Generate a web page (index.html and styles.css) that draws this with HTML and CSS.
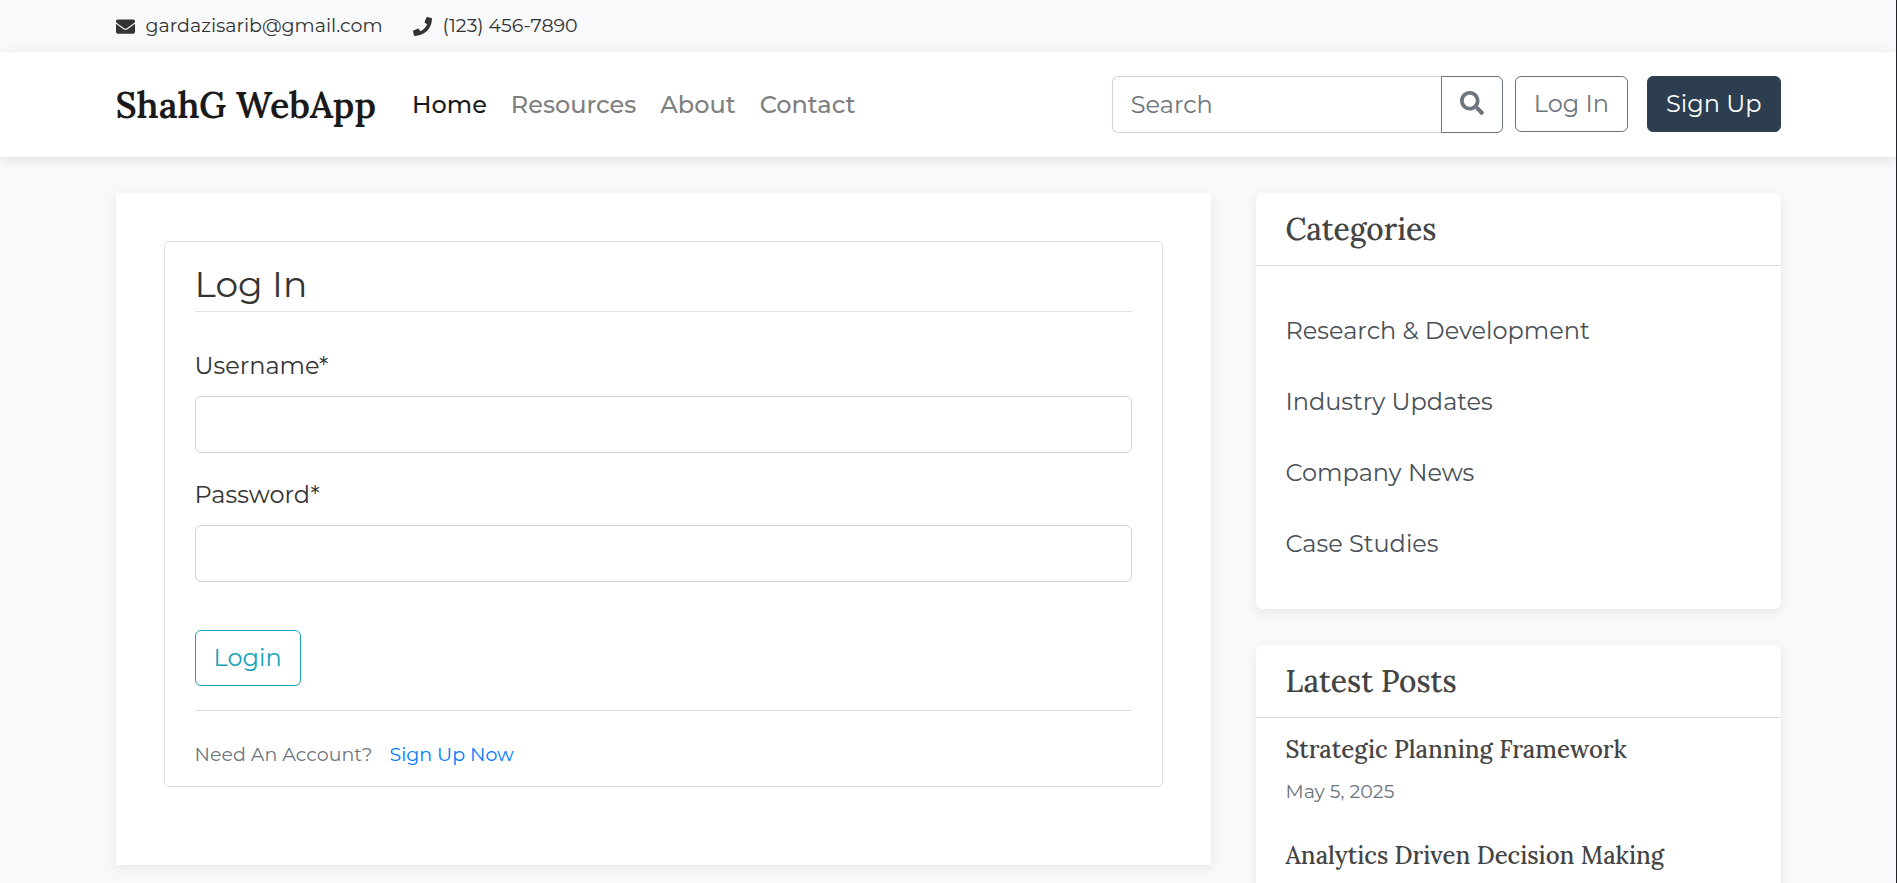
FILE: index.html
```html
<!DOCTYPE html>
<html lang="en">
<head>
<meta charset="utf-8">
<meta name="viewport" content="width=device-width, initial-scale=1">
<title>ShahG WebApp - Log In</title>
<link rel="stylesheet" href="styles.css">
</head>
<body>
<div class="topbar">
  <div class="container topbar-items">
    <a class="contact-link" href="mailto:gardazisarib@gmail.com">
      <svg class="contact-icon" viewBox="0 0 512 512" aria-hidden="true"><path fill="currentColor" d="M502.300 190.800c3.900-3.100 9.700-.2 9.700 4.700V400c0 26.500-21.500 48-48 48H48c-26.500 0-48-21.500-48-48V195.600c0-5 5.700-7.800 9.700-4.700 22.400 17.400 52.100 39.500 154.100 113.600 21.100 15.400 56.700 47.800 92.200 47.600 35.700.3 72-32.800 92.300-47.600 102-74.100 131.600-96.300 154-113.700zM256 320c23.200.4 56.600-29.200 73.400-41.400 132.700-96.300 142.800-104.700 173.400-128.700 5.800-4.500 9.200-11.500 9.200-18.900v-19c0-26.500-21.500-48-48-48H48c-26.500 0-48 21.500-48 48v19c0 7.400 3.400 14.300 9.200 18.900 30.600 23.900 40.700 32.400 173.400 128.700 16.800 12.200 50.200 41.800 73.400 41.400z"/></svg>
      <span>gardazisarib@gmail.com</span>
    </a>
    <a class="contact-link" href="tel:1234567890">
      <svg class="contact-icon" viewBox="0 0 512 512" aria-hidden="true"><path fill="currentColor" d="M493.400 24.600l-104-24c-11.300-2.600-22.900 3.300-27.500 13.900l-48 112c-4.200 9.800-1.400 21.300 6.900 28l60.600 49.600c-36 76.700-98.900 140.500-177.200 177.200l-49.600-60.600c-6.800-8.300-18.200-11.100-28-6.900l-112 48C3.900 366.500-2 378.100.6 389.400l24 104C27.100 504.200 36.700 512 48 512c256.100 0 464-207.500 464-464 0-11.200-7.700-20.900-18.600-23.400z"/></svg>
      <span>(123) 456-7890</span>
    </a>
  </div>
</div>

<header class="header">
  <div class="container header-row">
    <a class="brand" href="#">ShahG WebApp</a>
    <nav class="nav" aria-label="Main">
      <a class="nav-link active" href="#" aria-current="page">Home</a>
      <a class="nav-link" href="#">Resources</a>
      <a class="nav-link" href="#">About</a>
      <a class="nav-link" href="#">Contact</a>
    </nav>
    <form class="search">
      <input class="search-input" type="search" placeholder="Search" aria-label="Search">
      <button class="search-button" type="submit" aria-label="Submit search">
        <svg class="search-icon" viewBox="0 0 512 512" aria-hidden="true"><path fill="currentColor" d="M505 442.700L405.300 343c-4.500-4.500-10.600-7-17-7H372c27.600-35.300 44-79.700 44-128C416 93.100 322.900 0 208 0S0 93.100 0 208s93.100 208 208 208c48.300 0 92.700-16.400 128-44v16.300c0 6.400 2.500 12.500 7 17l99.700 99.700c9.400 9.400 24.600 9.400 33.900 0l28.300-28.300c9.400-9.400 9.400-24.600.1-34zM208 336c-70.700 0-128-57.200-128-128 0-70.700 57.200-128 128-128 70.700 0 128 57.200 128 128 0 70.700-57.200 128-128 128z"/></svg>
      </button>
    </form>
    <div class="actions">
      <a class="button button-outline" href="#">Log In</a>
      <a class="button button-dark" href="#">Sign Up</a>
    </div>
  </div>
</header>

<div class="container layout">
  <main class="panel">
    <section class="login-card">
      <form>
        <h1 class="login-title">Log In</h1>
        <div class="field">
          <label class="field-label" for="username">Username*</label>
          <input class="field-input" id="username" type="text" autocomplete="username" required>
        </div>
        <div class="field">
          <label class="field-label" for="password">Password*</label>
          <input class="field-input" id="password" type="password" autocomplete="current-password" required>
        </div>
        <button class="button button-info" type="submit">Login</button>
      </form>
      <p class="signup-note">Need An Account? <a class="signup-link" href="#">Sign Up Now</a></p>
    </section>
  </main>

  <aside class="sidebar">
    <section class="widget">
      <h2 class="widget-title">Categories</h2>
      <ul class="category-list">
        <li><a class="category-link" href="#">Research &amp; Development</a></li>
        <li><a class="category-link" href="#">Industry Updates</a></li>
        <li><a class="category-link" href="#">Company News</a></li>
        <li><a class="category-link" href="#">Case Studies</a></li>
      </ul>
    </section>
    <section class="widget">
      <h2 class="widget-title">Latest Posts</h2>
      <ul class="post-list">
        <li class="post">
          <a class="post-link" href="#">Strategic Planning Framework</a>
          <time class="post-date" datetime="2025-05-05">May 5, 2025</time>
        </li>
        <li class="post">
          <a class="post-link" href="#">Analytics Driven Decision Making</a>
        </li>
      </ul>
    </section>
  </aside>
</div>
</body>
</html>
```
FILE: styles.css
```css
*,
*::before,
*::after {
  box-sizing: border-box;
}

:root {
  --sans: Montserrat, Inter, sans-serif;
  --serif: Lora, "DejaVu Serif", serif;
}

body {
  margin: 0;
  min-height: 100vh;
  border-right: 1px solid #212529;
  background: #f8f9fb;
  color: #333;
  font: 400 24px/36px var(--sans);
}

a {
  color: inherit;
  text-decoration: none;
}

ul {
  margin: 0;
  padding: 0;
  list-style: none;
}

input,
button {
  font: inherit;
}

.container {
  width: calc(100% - 48px);
  max-width: 1665px;
  margin: 0 auto;
}

/* Contact bar */
.topbar {
  padding: 8px 0;
}

.topbar-items {
  display: flex;
  gap: 30px;
  font-size: 19px;
}

.contact-link {
  display: flex;
  align-items: center;
  gap: 11px;
}

.contact-icon {
  width: 19px;
  height: 19px;
}

/* Header */
.header {
  padding: 24px 0;
  background: #fff;
  box-shadow: 0 3px 12px rgba(0, 0, 0, 0.1);
}

.header-row {
  display: flex;
  align-items: center;
}

.brand {
  margin-right: 36px;
  color: #1a1a1a;
  font: 600 36px/48px var(--serif);
  white-space: nowrap;
}

.nav {
  display: flex;
  gap: 24px;
  margin-right: auto;
  color: #808080;
  font-weight: 500;
}

.nav-link.active {
  color: #1a1a1a;
}

.search {
  display: flex;
  width: 391px;
  margin-right: 12px;
}

.search-input {
  flex: 1;
  min-width: 0;
  height: 57px;
  padding: 0 18px;
  border: 1px solid #ced4da;
  border-right: 0;
  border-radius: 6px 0 0 6px;
  background: #fff;
  appearance: none;
}

.search-input::placeholder {
  color: #6c757d;
  opacity: 1;
}

.search-button {
  display: flex;
  align-items: center;
  justify-content: center;
  width: 62px;
  padding: 0 0 3px;
  border: 1px solid #6c757d;
  border-radius: 0 6px 6px 0;
  background: #fff;
  color: #6c757d;
}

.search-icon {
  width: 24px;
  height: 24px;
}

.actions {
  display: flex;
  align-self: flex-start;
  gap: 19px;
}

.button {
  display: inline-block;
  padding: 9px 18px;
  border: 1px solid;
  border-radius: 6px;
  background: #fff;
  white-space: nowrap;
}

.button-outline {
  border-color: #6c757d;
  color: #6c757d;
}

.button-dark {
  border-color: #2c3e50;
  background: #2c3e50;
  color: #fff;
}

.button-info {
  border-color: #17a2b8;
  color: #17a2b8;
}

/* Page body */
.layout {
  display: grid;
  grid-template-columns: minmax(0, 73fr) minmax(0, 35fr);
  align-items: start;
  gap: 45px;
  padding-top: 36px;
}

.panel {
  padding: 48px 48px 78px;
  background: #fff;
  box-shadow: 0 3px 12px rgba(0, 0, 0, 0.08);
}

.login-card {
  padding: 20px 30px 13px;
  border: 1px solid #dcdfe2;
  border-radius: 5px;
}

.login-title {
  margin: 0 0 36px;
  padding-bottom: 4px;
  border-bottom: 1px solid #dee2e6;
  font: 400 36px/45px var(--sans);
}

.field {
  margin-bottom: 24px;
}

.field-label {
  display: block;
  margin-bottom: 12px;
}

.field-input {
  width: 100%;
  height: 57px;
  padding: 0 18px;
  border: 1px solid #ced4da;
  border-radius: 6px;
  background: #fff;
}

.login-card .button {
  margin-top: 24px;
}

.signup-note {
  margin: 24px 0 0;
  padding-top: 26px;
  border-top: 1px solid #dcdfe2;
  color: #6c757d;
  font-size: 19px;
}

.signup-link {
  margin-left: 12px;
  color: #007bff;
}

/* Sidebar */
.sidebar {
  display: grid;
  gap: 36px;
}

.widget {
  border-radius: 6px;
  background: #fff;
  box-shadow: 0 3px 12px rgba(0, 0, 0, 0.08);
}

.widget-title {
  margin: 0;
  padding: 18px 30px;
  border-bottom: 1px solid #dcdfe2;
  color: #444;
  font: 500 30px/36px var(--serif);
}

.category-list {
  display: grid;
  gap: 35px;
  padding: 47px 30px;
  color: #495057;
}

.category-link {
  display: block;
}

.post-list {
  display: grid;
  gap: 28px;
  padding: 14px 30px 18px;
}

.post-link {
  display: block;
  color: #444;
  font: 500 24px/36px var(--serif);
}

.post-date {
  display: block;
  margin-top: 6px;
  color: #6c757d;
  font-size: 19px;
}
```
